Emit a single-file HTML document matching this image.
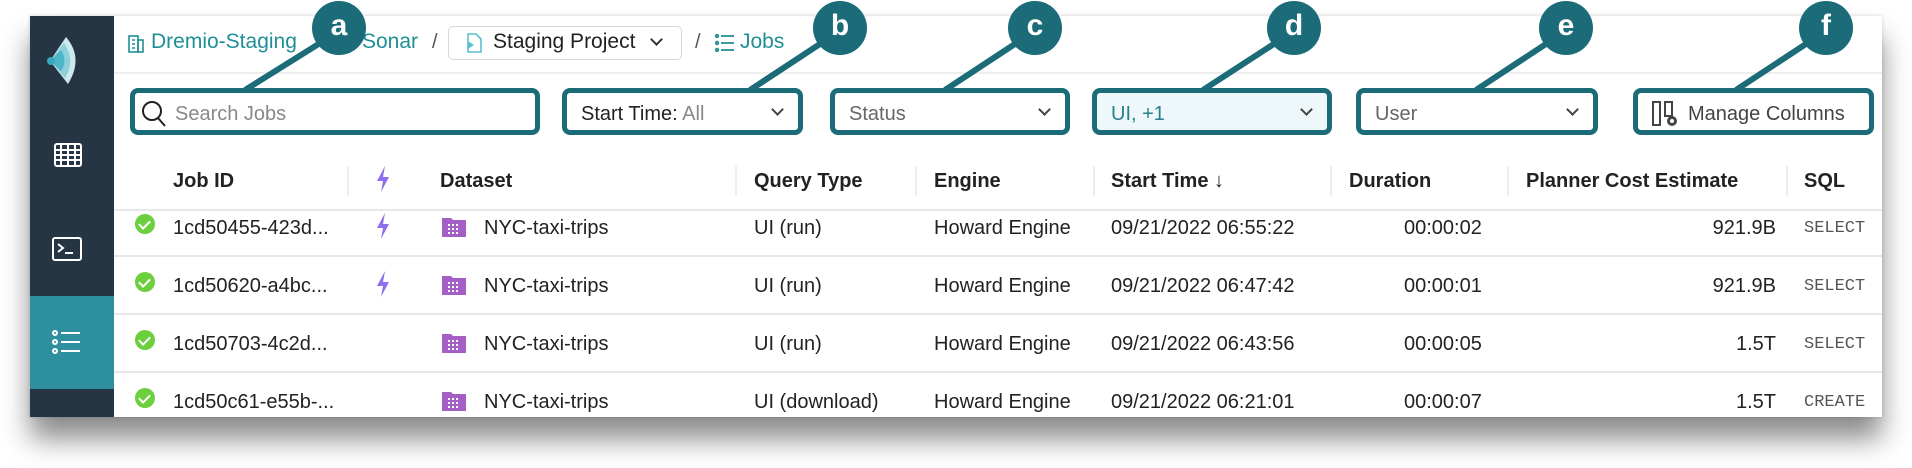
<!DOCTYPE html>
<html><head><meta charset="utf-8"><style>
*{box-sizing:border-box;margin:0;padding:0}
body{width:1912px;height:468px;background:#fff;position:relative;overflow:hidden;font-family:"Liberation Sans",sans-serif;color:#222}
.a{position:absolute}
.panel{left:30px;top:16px;width:1852px;height:401px;background:#fff;box-shadow:0 22px 26px rgba(0,0,0,.45),0 0 4px rgba(0,0,0,.15)}
.side{left:30px;top:16px;width:84px;height:401px;background:#263544}
.t{font-size:20px;white-space:nowrap}
.teal{color:#1f8f96}
.box{border:5px solid #1b6b78;border-radius:8px;background:#fff;height:47px;top:88px}
.box span{position:absolute;top:10px;font-size:20px;white-space:nowrap}
.chev{position:absolute;right:16px;top:12px;width:9px;height:9px;border-right:2px solid #444;border-bottom:2px solid #444;transform:rotate(45deg)}
.circ{width:54px;height:54px;border-radius:50%;background:#1b6b78;color:#fff;font-weight:bold;font-size:30px;text-align:center;line-height:50px;top:1px}
.hd{font-size:20px;font-weight:bold;top:170px;white-space:nowrap;color:#222}
.sep{width:2px;height:30px;top:166px;background:#eee}
.hl{height:2px;background:#e8e8e8;left:114px;width:1768px}
.ck{width:20px;height:20px;border-radius:50%;background:#6ccf3e;left:135px}
.ck:after{content:"";position:absolute;left:6px;top:4px;width:5px;height:9px;border-right:2px solid #fff;border-bottom:2px solid #fff;transform:rotate(45deg)}
.ds{width:26px;height:22px;left:441px}
.sql{font-family:"Liberation Mono",monospace;font-size:17px;color:#555}
.r .t{top:3px}
.r .sql{top:5px}
</style></head><body>
<div class="a panel"></div>
<div class="a side"></div>
<div class="a" style="left:30px;top:296px;width:84px;height:93px;background:#2e8f9f"></div>
<svg class="a" style="left:44px;top:34px" width="40" height="54" viewBox="0 0 40 54">
<path d="M22 3 Q40 24 24 50 L6 27 Z" fill="#cde9ee"/><path d="M20 9 Q32 26 21 44 L6 27 Z" fill="#8dd0dc"/><path d="M17 16 Q24 27 17 37 L6 27 Z" fill="#4fb6c9"/><circle cx="7" cy="27" r="4" fill="#3aa9c0"/></svg>
<svg class="a" style="left:54px;top:143px" width="28" height="24" viewBox="0 0 28 24"><rect x="1" y="1" width="26" height="22" rx="2" fill="none" stroke="#fff" stroke-width="2"/><path d="M1 7H27M1 12H27M1 17H27M7 1V23M14 1V23M21 1V23" stroke="#fff" stroke-width="2"/></svg>
<svg class="a" style="left:52px;top:237px" width="30" height="24" viewBox="0 0 30 24"><rect x="1" y="1" width="28" height="22" rx="2" fill="none" stroke="#fff" stroke-width="2"/><path d="M6 7l5 4-5 4M13 16h8" fill="none" stroke="#fff" stroke-width="2"/></svg>
<svg class="a" style="left:52px;top:330px" width="30" height="24" viewBox="0 0 30 24"><g fill="none" stroke="#fff" stroke-width="2"><circle cx="3" cy="3" r="2"/><circle cx="3" cy="12" r="2"/><circle cx="3" cy="21" r="2"/><path d="M9 3H28M9 12H28M9 21H28"/></g></svg>
<div class="a" style="left:114px;top:72px;width:1768px;height:2px;background:#eee"></div>
<svg class="a" style="left:128px;top:33px" width="16" height="20" viewBox="0 0 16 20"><g fill="none" stroke="#1f8f96" stroke-width="1.6"><rect x="1" y="3" width="9" height="16"/><rect x="10" y="7" width="5" height="12"/><path d="M4 7h3M4 11h3M4 15h3"/></g></svg>
<div class="a t teal" style="left:151px;top:30px;font-size:21px">Dremio-Staging</div>
<div class="a t" style="left:316px;top:31px;color:#555">/</div>
<div class="a t teal" style="left:362px;top:30px;font-size:21px">Sonar</div>
<div class="a t" style="left:432px;top:31px;color:#555">/</div>
<div class="a" style="left:448px;top:26px;width:234px;height:34px;border:1.5px solid #d8d8d8;border-radius:5px"></div>
<svg class="a" style="left:466px;top:33px" width="16" height="20" viewBox="0 0 16 20"><path d="M2 1h8l5 5v13H2z" fill="none" stroke="#5bbfd4" stroke-width="1.6"/><path d="M2 8l6 4-6 4z" fill="#5bbfd4"/></svg>
<div class="a t" style="left:493px;top:30px;font-size:21px">Staging Project</div>
<div class="a" style="left:652px;top:35px;width:9px;height:9px;border-right:2px solid #333;border-bottom:2px solid #333;transform:rotate(45deg)"></div>
<div class="a t" style="left:695px;top:31px;color:#555">/</div>
<svg class="a" style="left:715px;top:34px" width="20" height="18" viewBox="0 0 20 18"><g fill="none" stroke="#1f8f96" stroke-width="1.8"><circle cx="2" cy="2" r="1.3"/><circle cx="2" cy="9" r="1.3"/><circle cx="2" cy="16" r="1.3"/><path d="M6 2h13M6 9h13M6 16h13"/></g></svg>
<div class="a t teal" style="left:740px;top:30px;font-size:21px">Jobs</div>
<svg class="a" style="left:0;top:0" width="1912" height="100"><g stroke="#1b6b78" stroke-width="6"><line x1="325" y1="40" x2="245" y2="90"/><line x1="826" y1="40" x2="750" y2="90"/><line x1="1021" y1="40" x2="945" y2="90"/><line x1="1280" y1="40" x2="1203" y2="90"/><line x1="1552" y1="40" x2="1476" y2="90"/><line x1="1812" y1="40" x2="1736" y2="90"/></g></svg>
<div class="a box" style="left:130px;width:410px"><svg style="position:absolute;left:6px;top:7px" width="26" height="28" viewBox="0 0 26 28"><circle cx="11" cy="11" r="9" fill="none" stroke="#222" stroke-width="2"/><path d="M17 18l7 8" stroke="#222" stroke-width="2"/></svg><span style="left:40px;color:#888">Search Jobs</span></div>
<div class="a box" style="left:562px;width:241px"><span style="left:14px">Start Time: <span style="position:static;color:#888">All</span></span><i class="chev"></i></div>
<div class="a box" style="left:830px;width:240px"><span style="left:14px;color:#666">Status</span><i class="chev"></i></div>
<div class="a box" style="left:1092px;width:240px;background:#eef8fa"><span style="left:14px;color:#2a7f8c">UI, +1</span><i class="chev"></i></div>
<div class="a box" style="left:1356px;width:242px"><span style="left:14px;color:#666">User</span><i class="chev"></i></div>
<div class="a box" style="left:1633px;width:241px"><svg style="position:absolute;left:14px;top:8px" width="28" height="26" viewBox="0 0 28 26"><g fill="none" stroke="#444" stroke-width="2"><rect x="1" y="1" width="7" height="23"/><rect x="13" y="1" width="7" height="14"/></g><circle cx="20" cy="20" r="5" fill="#444"/><circle cx="20" cy="20" r="2" fill="#fff"/></svg><span style="left:50px;color:#444">Manage Columns</span></div>
<div class="a circ" style="left:312px">a</div>
<div class="a circ" style="left:813px">b</div>
<div class="a circ" style="left:1008px">c</div>
<div class="a circ" style="left:1267px">d</div>
<div class="a circ" style="left:1539px">e</div>
<div class="a circ" style="left:1799px">f</div>
<div class="a hd" style="left:173px">Job ID</div>
<div class="a sep" style="left:347px"></div>
<svg class="a" style="left:376px;top:166px" width="14" height="26" viewBox="0 0 14 26"><path d="M9 0L1 15h6l-2 11 8-15H7z" fill="#8f6cf0"/></svg>
<div class="a hd" style="left:440px">Dataset</div>
<div class="a sep" style="left:735px"></div>
<div class="a hd" style="left:754px">Query Type</div>
<div class="a sep" style="left:915px"></div>
<div class="a hd" style="left:934px">Engine</div>
<div class="a sep" style="left:1093px"></div>
<div class="a hd" style="left:1111px">Start Time ↓</div>
<div class="a sep" style="left:1330px"></div>
<div class="a hd" style="left:1349px">Duration</div>
<div class="a sep" style="left:1507px"></div>
<div class="a hd" style="left:1526px">Planner Cost Estimate</div>
<div class="a sep" style="left:1786px"></div>
<div class="a hd" style="left:1804px">SQL</div>
<div class="a hl" style="top:209px"></div>
<div class="a hl" style="top:255px"></div>
<div class="a hl" style="top:313px"></div>
<div class="a hl" style="top:371px"></div>
<svg width="0" height="0" style="position:absolute"><defs><symbol id="dsi" viewBox="0 0 26 22"><path d="M1 2h9l2 2h13v17H1z" fill="#a35fc5"/><g fill="#fff"><rect x="7" y="8" width="2" height="2"/><rect x="11" y="8" width="2" height="2"/><rect x="15" y="8" width="2" height="2"/><rect x="7" y="12" width="2" height="2"/><rect x="11" y="12" width="2" height="2"/><rect x="15" y="12" width="2" height="2"/><rect x="7" y="16" width="2" height="2"/><rect x="11" y="16" width="2" height="2"/><rect x="15" y="16" width="2" height="2"/></g></symbol></defs></svg>
<div class="a r" style="left:0;top:214px;width:1882px">
<div class="a ck" style="top:0"></div><div class="a t" style="left:173px">1cd50455-423d...</div>
<svg class="a" style="left:376px;top:-1px" width="14" height="26" viewBox="0 0 14 26"><path d="M9 0L1 15h6l-2 11 8-15H7z" fill="#8f6cf0"/></svg>
<svg class="a ds" style="top:2px"><use href="#dsi"/></svg><div class="a t" style="left:484px">NYC-taxi-trips</div>
<div class="a t" style="left:754px">UI (run)</div><div class="a t" style="left:934px">Howard Engine</div>
<div class="a t" style="left:1111px">09/21/2022 06:55:22</div><div class="a t" style="left:1404px">00:00:02</div>
<div class="a t" style="right:106px">921.9B</div><div class="a sql" style="left:1804px">SELECT</div>
</div>
<div class="a r" style="left:0;top:272px;width:1882px">
<div class="a ck" style="top:0"></div><div class="a t" style="left:173px">1cd50620-a4bc...</div>
<svg class="a" style="left:376px;top:-1px" width="14" height="26" viewBox="0 0 14 26"><path d="M9 0L1 15h6l-2 11 8-15H7z" fill="#8f6cf0"/></svg>
<svg class="a ds" style="top:2px"><use href="#dsi"/></svg><div class="a t" style="left:484px">NYC-taxi-trips</div>
<div class="a t" style="left:754px">UI (run)</div><div class="a t" style="left:934px">Howard Engine</div>
<div class="a t" style="left:1111px">09/21/2022 06:47:42</div><div class="a t" style="left:1404px">00:00:01</div>
<div class="a t" style="right:106px">921.9B</div><div class="a sql" style="left:1804px">SELECT</div>
</div>
<div class="a r" style="left:0;top:330px;width:1882px">
<div class="a ck" style="top:0"></div><div class="a t" style="left:173px">1cd50703-4c2d...</div>
<svg class="a ds" style="top:2px"><use href="#dsi"/></svg><div class="a t" style="left:484px">NYC-taxi-trips</div>
<div class="a t" style="left:754px">UI (run)</div><div class="a t" style="left:934px">Howard Engine</div>
<div class="a t" style="left:1111px">09/21/2022 06:43:56</div><div class="a t" style="left:1404px">00:00:05</div>
<div class="a t" style="right:106px">1.5T</div><div class="a sql" style="left:1804px">SELECT</div>
</div>
<div class="a r" style="left:0;top:388px;width:1882px">
<div class="a ck" style="top:0"></div><div class="a t" style="left:173px">1cd50c61-e55b-...</div>
<svg class="a ds" style="top:2px"><use href="#dsi"/></svg><div class="a t" style="left:484px">NYC-taxi-trips</div>
<div class="a t" style="left:754px">UI (download)</div><div class="a t" style="left:934px">Howard Engine</div>
<div class="a t" style="left:1111px">09/21/2022 06:21:01</div><div class="a t" style="left:1404px">00:00:07</div>
<div class="a t" style="right:106px">1.5T</div><div class="a sql" style="left:1804px">CREATE</div>
</div>
</body></html>
